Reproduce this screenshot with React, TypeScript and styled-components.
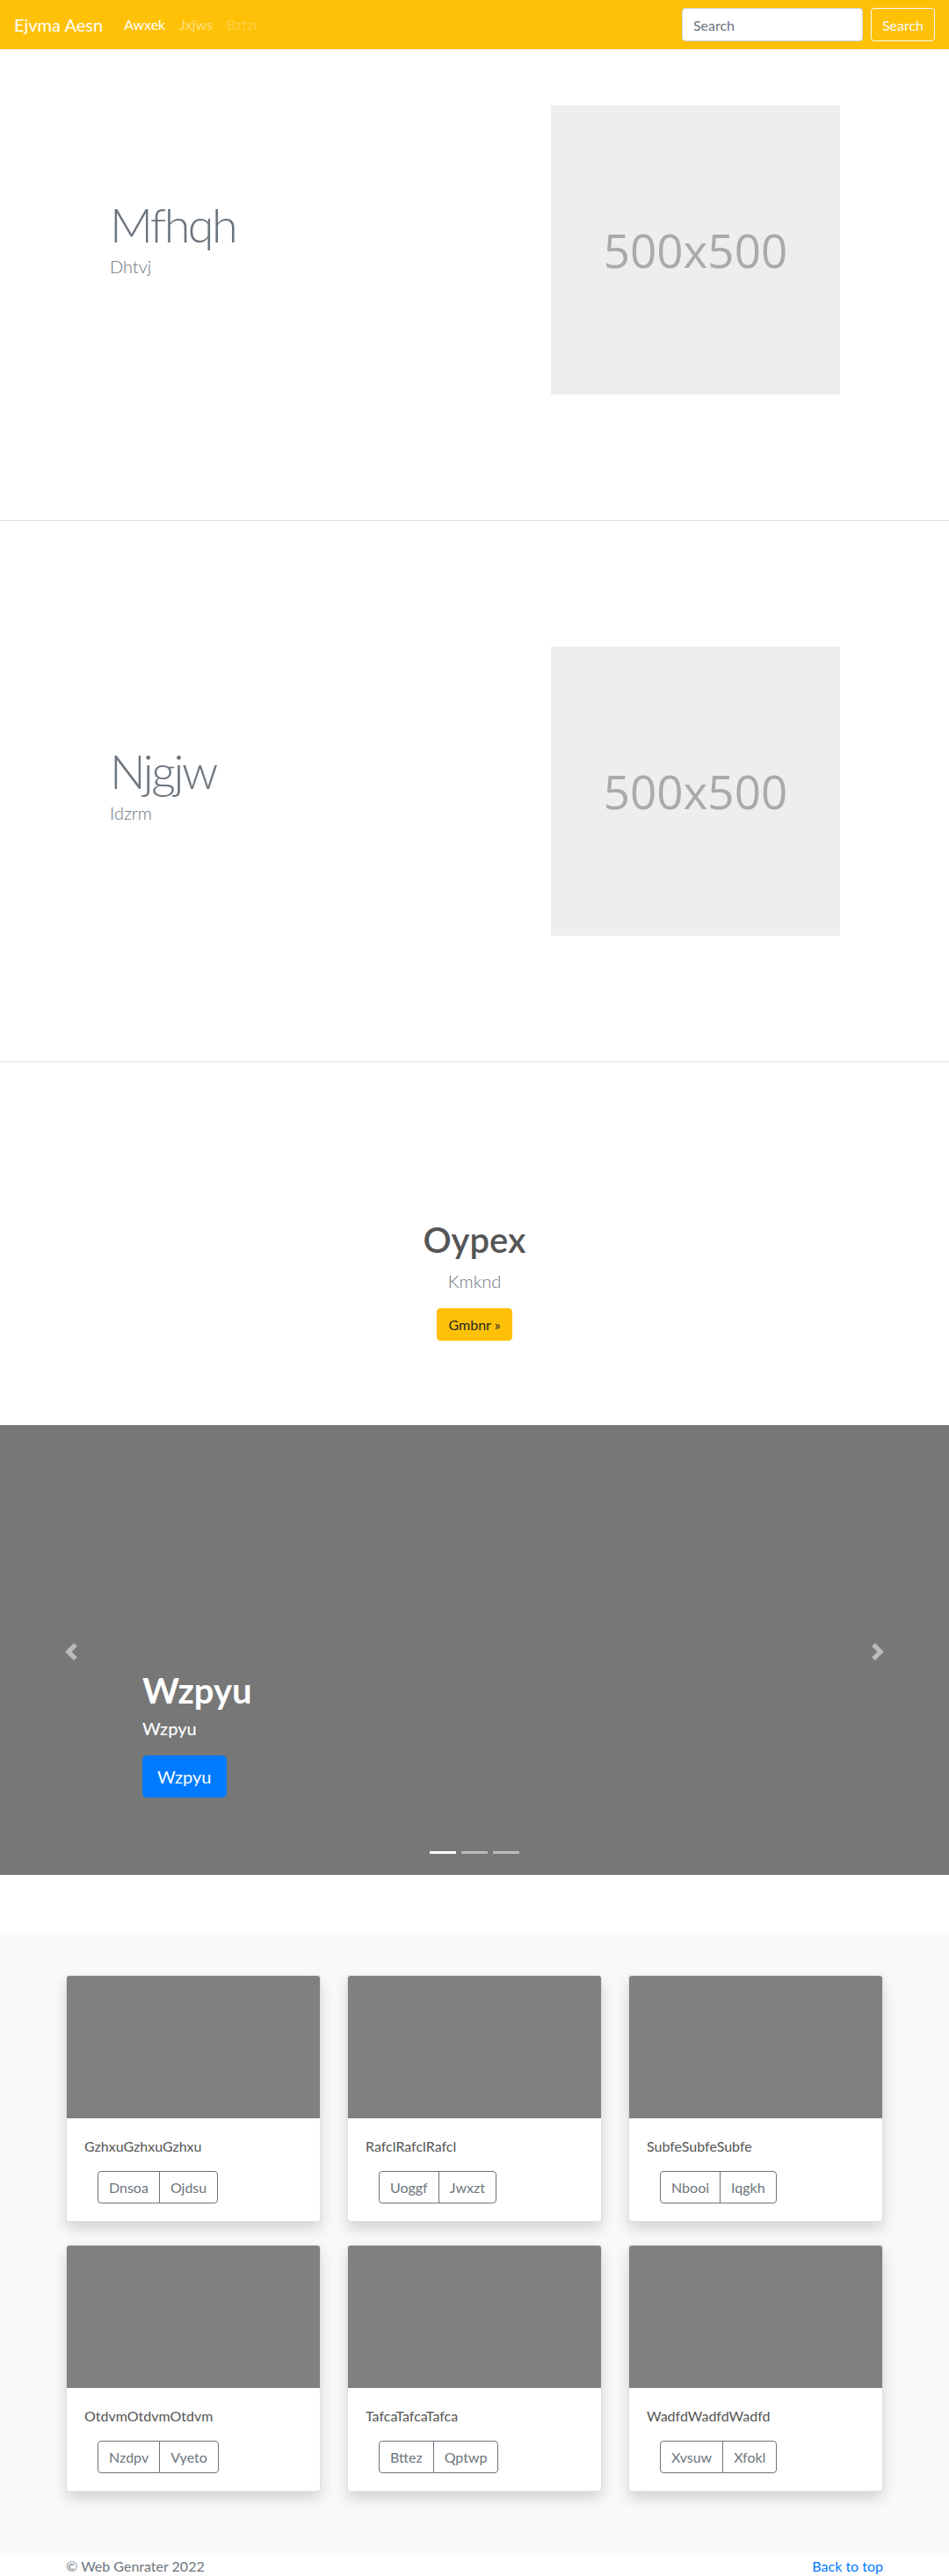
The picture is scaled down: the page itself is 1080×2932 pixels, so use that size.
import React from "react";
import styled, { createGlobalStyle } from "styled-components";

const FONT = `"Segoe UI", Lato, "Noto Sans", sans-serif`;

const Global = createGlobalStyle`
  * { box-sizing: border-box; }
  body {
    margin: 0;
    font-family: ${FONT};
    font-size: 16px;
    line-height: 1.5;
    color: #212529;
    background: #fff;
  }
`;

const Navbar = styled.nav`
  height: 56px;
  background: #ffc107;
  display: flex;
  align-items: center;
  padding: 8px 16px;
`;

const Brand = styled.a`
  font-size: 20px;
  color: #fff;
  margin-right: 16px;
  line-height: 1.5;
  white-space: nowrap;
`;

const NavList = styled.div`
  display: flex;
  flex: 1;
`;

const NavLink = styled.a<{ $tone: number }>`
  padding: 8px;
  color: rgba(255, 255, 255, ${(p) => p.$tone});
  font-size: 16px;
`;

const SearchForm = styled.form`
  display: flex;
  align-items: center;
  gap: 9px;
`;

const SearchInput = styled.input`
  width: 206px;
  height: 38px;
  padding: 6px 12px;
  font-family: ${FONT};
  font-size: 16px;
  color: #495057;
  background: #fff;
  border: 1px solid #ced4da;
  border-radius: 4px;
  &::placeholder { color: #6c757d; }
`;

const OutlineLightButton = styled.button`
  height: 38px;
  padding: 6px 12px;
  font-family: ${FONT};
  font-size: 16px;
  color: #f8f9fa;
  background: transparent;
  border: 1px solid #f8f9fa;
  border-radius: 4px;
`;

const Hero = styled.section<{ $top: number; $bottom: number }>`
  padding: ${(p) => p.$top}px 0 ${(p) => p.$bottom}px;
  border-bottom: 1px solid #e3e3e3;
`;

const HeroInner = styled.div`
  width: 960px;
  margin: 0 auto;
  display: flex;
  align-items: center;
`;

const HeroText = styled.div<{ $lift: number }>`
  flex: 1;
  padding-left: 65px;
  margin-bottom: ${(p) => p.$lift}px;
`;

const HeroTitle = styled.h1`
  margin: 0;
  font-size: 54px;
  font-weight: 300;
  line-height: 1.2;
  letter-spacing: -2.5px;
  color: #6c757d;
`;

const HeroLead = styled.p`
  margin: 0;
  font-size: 20px;
  font-weight: 300;
  line-height: 1.5;
  color: #6c757d;
`;

const HeroMedia = styled.div`
  width: 480px;
  padding-left: 87px;
`;

const Placeholder = styled.div`
  width: 329px;
  height: 329px;
  background: #eeeeee;
  color: #aaaaaa;
  display: flex;
  align-items: center;
  justify-content: center;
  font-family: "Open Sans", sans-serif;
  font-size: 53px;
`;

const Feature = styled.section`
  padding: 178px 0 96px;
  text-align: center;
`;

const FeatureTitle = styled.h1`
  margin: 0 0 8px;
  font-size: 40px;
  font-weight: 600;
  line-height: 1.2;
  color: #555555;
`;

const FeatureLead = styled.p`
  margin: 0 0 16px;
  font-size: 20px;
  font-weight: 300;
  color: #6c757d;
`;

const WarningButton = styled.a`
  display: inline-block;
  height: 37px;
  padding: 6px 12px;
  font-size: 16px;
  line-height: 24px;
  color: #212529;
  background: #ffc107;
  border: 1px solid #ffc107;
  border-radius: 4px;
`;

const Carousel = styled.div`
  position: relative;
  height: 512px;
  background: #777777;
  margin-bottom: 66px;
`;

const Control = styled.a<{ $side: "left" | "right" }>`
  position: absolute;
  top: 0;
  bottom: 0;
  ${(p) => p.$side}: 0;
  width: 15%;
  display: flex;
  align-items: center;
  justify-content: center;
  opacity: 0.5;
  padding-top: 4px;
`;

const Caption = styled.div`
  position: absolute;
  left: 15%;
  right: 15%;
  bottom: 88px;
  color: #fff;
`;

const CaptionTitle = styled.h1`
  margin: 0 0 4px;
  font-size: 40px;
  font-weight: 700;
  line-height: 1.2;
`;

const CaptionText = styled.p`
  margin: 0 0 16px;
  font-size: 20px;
  font-weight: 500;
  line-height: 1.5;
`;

const PrimaryButton = styled.a`
  display: inline-block;
  height: 48px;
  padding: 8px 16px;
  font-size: 20px;
  line-height: 30px;
  color: #fff;
  background: #007bff;
  border: 1px solid #007bff;
  border-radius: 4.8px;
`;

const Indicators = styled.div`
  position: absolute;
  left: 0;
  right: 0;
  bottom: 24px;
  display: flex;
  justify-content: center;
  gap: 6px;
`;

const Indicator = styled.span<{ $active?: boolean }>`
  width: 30px;
  height: 3px;
  background: #fff;
  opacity: ${(p) => (p.$active ? 1 : 0.5)};
`;

const Album = styled.section`
  background: #f8f9fa;
  padding: 48px 0;
`;

const CardGrid = styled.div`
  width: 930px;
  margin: 0 auto;
  display: grid;
  grid-template-columns: repeat(3, 1fr);
  column-gap: 30px;
  row-gap: 26px;
  padding-bottom: 22px;
`;

const Card = styled.div`
  background: #fff;
  border: 1px solid rgba(0, 0, 0, 0.125);
  border-radius: 4px;
  overflow: hidden;
  box-shadow: 0 8px 16px rgba(0, 0, 0, 0.15);
`;

const CardImage = styled.div`
  height: 162px;
  background: #808080;
`;

const CardBody = styled.div`
  padding: 20px;
`;

const CardText = styled.p`
  margin: 0 0 16px;
  font-size: 16px;
  line-height: 24px;
  color: #555555;
`;

const ButtonGroup = styled.div`
  display: inline-flex;
  margin-left: 15px;
`;

const GroupButton = styled.button`
  height: 37px;
  padding: 5px 12px;
  font-family: ${FONT};
  font-size: 16px;
  line-height: 24px;
  color: #6c757d;
  background: transparent;
  border: 1px solid #6c757d;
  &:first-child {
    border-radius: 4px 0 0 4px;
  }
  &:last-child {
    border-radius: 0 4px 4px 0;
    margin-left: -1px;
  }
`;

const Footer = styled.footer`
  width: 930px;
  margin: 0 auto;
  padding: 3px 0 48px;
  display: flex;
  justify-content: space-between;
  color: #6c757d;
`;

const TopLink = styled.a`
  color: #007bff;
`;

const Chevron = ({ dir }: { dir: "left" | "right" }) => (
  <svg width="20" height="20" viewBox="0 0 8 8" fill="#fff">
    {dir === "left" ? (
      <path d="M5.25 0l-4 4 4 4 1.5-1.5L4.25 4l2.5-2.5L5.25 0z" />
    ) : (
      <path d="M2.75 0l-1.5 1.5L3.75 4l-2.5 2.5L2.75 8l4-4-4-4z" />
    )}
  </svg>
);

const cards = [
  ["GzhxuGzhxuGzhxu", "Dnsoa", "Ojdsu"],
  ["RafclRafclRafcl", "Uoggf", "Jwxzt"],
  ["SubfeSubfeSubfe", "Nbooi", "Iqgkh"],
  ["OtdvmOtdvmOtdvm", "Nzdpv", "Vyeto"],
  ["TafcaTafcaTafca", "Bttez", "Qptwp"],
  ["WadfdWadfdWadfd", "Xvsuw", "Xfokl"],
];

export default function App() {
  return (
    <>
      <Global />
      <Navbar>
        <Brand>Ejvma Aesn</Brand>
        <NavList>
          <NavLink $tone={1}>Awxek</NavLink>
          <NavLink $tone={0.5}>Jxjws</NavLink>
          <NavLink $tone={0.25}>Bzfzr</NavLink>
        </NavList>
        <SearchForm onSubmit={(e) => e.preventDefault()}>
          <SearchInput placeholder="Search" />
          <OutlineLightButton type="button">Search</OutlineLightButton>
        </SearchForm>
      </Navbar>

      <Hero $top={64} $bottom={143}>
        <HeroInner>
          <HeroText $lift={27}>
            <HeroTitle>Mfhqh</HeroTitle>
            <HeroLead>Dhtvj</HeroLead>
          </HeroText>
          <HeroMedia>
            <Placeholder>500x500</Placeholder>
          </HeroMedia>
        </HeroInner>
      </Hero>

      <Hero $top={143} $bottom={143}>
        <HeroInner>
          <HeroText $lift={15}>
            <HeroTitle>Njgjw</HeroTitle>
            <HeroLead>Idzrm</HeroLead>
          </HeroText>
          <HeroMedia>
            <Placeholder>500x500</Placeholder>
          </HeroMedia>
        </HeroInner>
      </Hero>

      <Feature>
        <FeatureTitle>Oypex</FeatureTitle>
        <FeatureLead>Kmknd</FeatureLead>
        <WarningButton>Gmbnr »</WarningButton>
      </Feature>

      <Carousel>
        <Control $side="left">
          <Chevron dir="left" />
        </Control>
        <Control $side="right">
          <Chevron dir="right" />
        </Control>
        <Caption>
          <CaptionTitle>Wzpyu</CaptionTitle>
          <CaptionText>Wzpyu</CaptionText>
          <PrimaryButton>Wzpyu</PrimaryButton>
        </Caption>
        <Indicators>
          <Indicator $active />
          <Indicator />
          <Indicator />
        </Indicators>
      </Carousel>

      <Album>
        <CardGrid>
          {cards.map(([text, a, b]) => (
            <Card key={text}>
              <CardImage />
              <CardBody>
                <CardText>{text}</CardText>
                <ButtonGroup>
                  <GroupButton type="button">{a}</GroupButton>
                  <GroupButton type="button">{b}</GroupButton>
                </ButtonGroup>
              </CardBody>
            </Card>
          ))}
        </CardGrid>
      </Album>

      <Footer>
        <span>© Web Genrater 2022</span>
        <TopLink>Back to top</TopLink>
      </Footer>
    </>
  );
}
